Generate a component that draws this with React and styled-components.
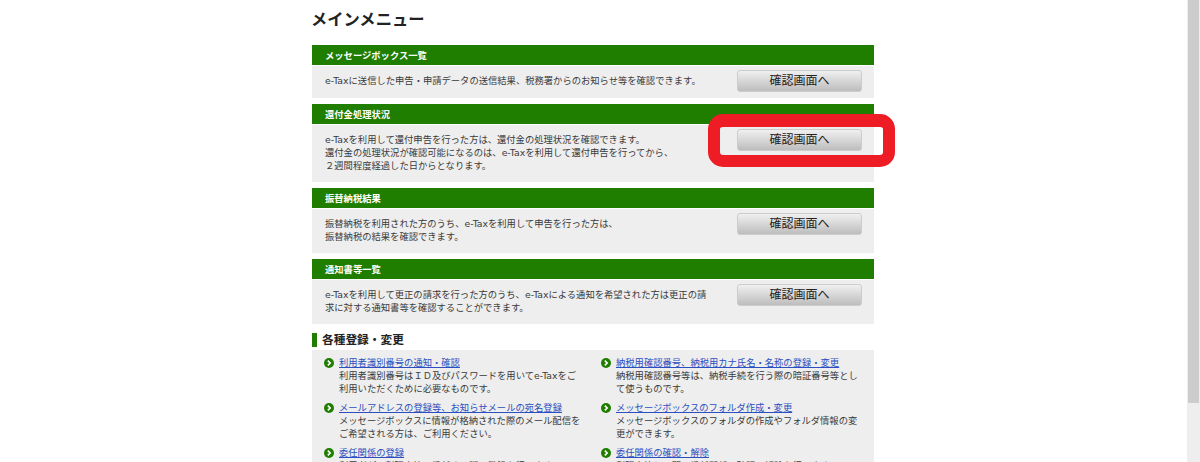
import React from "react";
import styled, { createGlobalStyle } from "styled-components";

const sections = [
  {
    title: "メッセージボックス一覧",
    lines: ["e-Taxに送信した申告・申請データの送信結果、税務署からのお知らせ等を確認できます。"],
    height: 32,
  },
  {
    title: "還付金処理状況",
    lines: [
      "e-Taxを利用して還付申告を行った方は、還付金の処理状況を確認できます。",
      "還付金の処理状況が確認可能になるのは、e-Taxを利用して還付申告を行ってから、",
      "２週間程度経過した日からとなります。",
    ],
    height: 57,
    marked: true,
  },
  {
    title: "振替納税結果",
    lines: [
      "振替納税を利用された方のうち、e-Taxを利用して申告を行った方は、",
      "振替納税の結果を確認できます。",
    ],
    height: 44,
  },
  {
    title: "通知書等一覧",
    lines: [
      "e-Taxを利用して更正の請求を行った方のうち、e-Taxによる通知を希望された方は更正の請",
      "求に対する通知書等を確認することができます。",
    ],
    height: 44,
  },
];

const links = [
  {
    title: "利用者識別番号の通知・確認",
    text: ["利用者識別番号はＩＤ及びパスワードを用いてe-Taxをご", "利用いただくために必要なものです。"],
  },
  {
    title: "納税用確認番号、納税用カナ氏名・名称の登録・変更",
    text: ["納税用確認番号等は、納税手続を行う際の暗証番号等とし", "て使うものです。"],
  },
  {
    title: "メールアドレスの登録等、お知らせメールの宛名登録",
    text: ["メッセージボックスに情報が格納された際のメール配信を", "ご希望される方は、ご利用ください。"],
  },
  {
    title: "メッセージボックスのフォルダ作成・変更",
    text: ["メッセージボックスのフォルダの作成やフォルダ情報の変", "更ができます。"],
  },
  {
    title: "委任関係の登録",
    text: ["利用者が、税理士等に委任する際の登録を行います。"],
  },
  {
    title: "委任関係の確認・解除",
    text: ["税理士等との間の委任関係の確認・解除を行います。"],
  },
];

const Arrow = () => (
  <ArrowIcon viewBox="0 0 10 10">
    <circle cx="5" cy="5" r="5" fill="#1f7d00" />
    <path d="M3.8 2.6 6.2 5 3.8 7.4" fill="none" stroke="#fff" strokeWidth="1.6" />
  </ArrowIcon>
);

const App = () => {
  return (
    <Page>
      <GlobalStyle />
      <Main>
        <Title>メインメニュー</Title>
        {sections.map((s) => (
          <Section key={s.title}>
            <SectionHeader>{s.title}</SectionHeader>
            <SectionBody height={s.height}>
              <Desc>
                {s.lines.map((l) => (
                  <div key={l}>{l}</div>
                ))}
              </Desc>
              <ButtonWrap>
                <ConfirmButton>確認画面へ</ConfirmButton>
                {s.marked && <RedMark />}
              </ButtonWrap>
            </SectionBody>
          </Section>
        ))}
        <SubTitle>各種登録・変更</SubTitle>
        <LinkPanel>
          {links.map((l) => (
            <LinkItem key={l.title}>
              <Arrow />
              <div>
                <LinkTitle href="#">{l.title}</LinkTitle>
                {l.text.map((t) => (
                  <LinkText key={t}>{t}</LinkText>
                ))}
              </div>
            </LinkItem>
          ))}
        </LinkPanel>
      </Main>
      <ScrollTrack>
        <ScrollThumb />
      </ScrollTrack>
    </Page>
  );
};

const GlobalStyle = createGlobalStyle`
  html, body {
    margin: 0;
    padding: 0;
    background: #fff;
    overflow: hidden;
  }
`;
const Page = styled.div`
  display: flex;
  justify-content: space-between;
  height: 462px;
  overflow: hidden;
  padding-left: 312px;
  font-family: "DejaVu Sans", "Noto Sans CJK JP", sans-serif;
  color: #333;
`;
const Main = styled.main`
  width: 562px;
`;
const Title = styled.h1`
  margin: 0 0 0 -1px;
  height: 45px;
  padding-top: 10px;
  box-sizing: border-box;
  font-size: 16.3px;
  line-height: 20px;
  font-weight: 700;
  color: #222;
`;
const Section = styled.section`
  margin-bottom: 6px;
`;
const SectionHeader = styled.h2`
  margin: 0;
  height: 21px;
  padding-left: 13px;
  background: #1f7d00;
  border-bottom: 1px solid #fff;
  box-sizing: border-box;
  font-size: 9.3px;
  line-height: 21px;
  font-weight: 700;
  color: #fff;
`;
const SectionBody = styled.div`
  display: flex;
  justify-content: space-between;
  height: ${(props) => props.height}px;
  padding: 8px 12px 0 13px;
  box-sizing: border-box;
  background: #eee;
`;
const Desc = styled.div`
  font-size: 9.3px;
  line-height: 13px;
  color: #3a3a3a;
`;
const ButtonWrap = styled.div`
  position: relative;
  flex: none;
  margin-top: -4px;
`;
const ConfirmButton = styled.button`
  display: block;
  width: 125px;
  height: 22px;
  padding: 0;
  border: 1px solid #ccc;
  border-radius: 3px;
  background: linear-gradient(#f0f0f0, #bdbdbd);
  font-family: inherit;
  font-size: 12px;
  font-weight: 400;
  line-height: 20px;
  color: #222;
`;
const RedMark = styled.div`
  position: absolute;
  left: -29px;
  top: -15px;
  width: 187px;
  height: 53px;
  box-sizing: border-box;
  border: 12px solid #ee1c25;
  border-top-width: 13px;
  border-radius: 15px;
`;
const SubTitle = styled.h3`
  margin: 9px 0 3px;
  height: 14px;
  padding-left: 5px;
  border-left: 5px solid #1f7d00;
  font-size: 11.7px;
  line-height: 14px;
  font-weight: 700;
  color: #222;
`;
const LinkPanel = styled.div`
  display: grid;
  grid-template-columns: 277px 1fr;
  row-gap: 6px;
  padding: 6px 0 0 12px;
  background: #eee;
`;
const LinkItem = styled.div`
  display: flex;
  gap: 5px;
`;
const ArrowIcon = styled.svg`
  flex: none;
  width: 10px;
  height: 10px;
  margin-top: 2px;
`;
const LinkTitle = styled.a`
  display: block;
  font-size: 9.3px;
  line-height: 13px;
  color: #2b4fc0;
  text-decoration: underline;
`;
const LinkText = styled.div`
  font-size: 9.3px;
  line-height: 13px;
  color: #3a3a3a;
`;
const ScrollTrack = styled.aside`
  flex: none;
  width: 13px;
  height: 462px;
  background: #eee;
`;
const ScrollThumb = styled.div`
  width: 11px;
  height: 403px;
  margin-left: 1px;
  background: #ccc;
`;

export default App;
